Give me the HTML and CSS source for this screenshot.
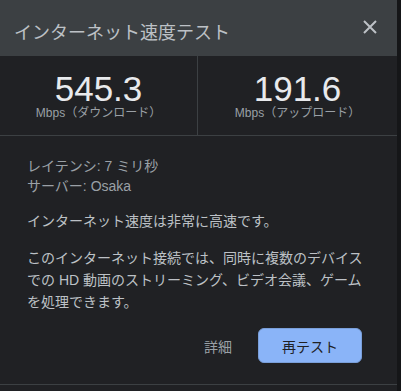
FILE: index.html
```html
<!DOCTYPE html>
<html lang="ja">
<head>
  <meta charset="UTF-8">
  <title>インターネット速度テスト</title>
  <link rel="stylesheet" href="styles.css">
</head>
<body>

<div class="panel">
  <div class="header">
    <div class="title">インターネット速度テスト</div>
    <svg class="close" width="14" height="14" viewBox="0 0 14 14">
      <path d="M1 1 L13 13 M13 1 L1 13" stroke="#bdc1c6" stroke-width="2" fill="none"/>
    </svg>
  </div>

  <div class="stats">
    <div class="stat">
      <div class="num">545.3</div>
      <div class="unit">Mbps（ダウンロード）</div>
    </div>
    <div class="stat">
      <div class="num">191.6</div>
      <div class="unit">Mbps（アップロード）</div>
    </div>
  </div>

  <div class="content">
    <div class="meta">
      <div>レイテンシ: 7 ミリ秒</div>
      <div>サーバー: Osaka</div>
    </div>
    <p class="summary">インターネット速度は非常に高速です。</p>
    <p class="desc">このインターネット接続では、同時に複数のデバイスでの HD 動画のストリーミング、ビデオ会議、ゲームを処理できます。</p>
    <div class="actions">
      <button class="link-btn">詳細</button>
      <button class="primary-btn">再テスト</button>
    </div>
  </div>
  <div class="rule"></div>
</div>

</body>
</html>
```

FILE: styles.css
```css
body {
  margin: 0;
  background: #151618;
  font-family: "Liberation Sans", "Noto Sans CJK JP", sans-serif;
}

.panel {
  width: 397px;
  height: 391px;
  background: #202124;
}

.header {
  display: flex;
  justify-content: space-between;
  align-items: flex-start;
  box-sizing: border-box;
  height: 56px;
  padding: 20px 20px 0 14px;
  background: #3c4043;
}

.title {
  font-size: 18px;
  line-height: 25px;
  padding-top: 1px;
  color: #bdc1c6;
}

.stats {
  display: grid;
  grid-template-columns: 198px 1fr;
  border-bottom: 1px solid #3c4043;
}

.stat {
  height: 79px;
  box-sizing: border-box;
  padding-top: 15px;
  text-align: center;
}

.stat:first-child {
  border-right: 1px solid #3c4043;
}

.num {
  font-size: 35px;
  line-height: 36px;
  color: #e8eaed;
}

.unit {
  font-size: 12px;
  line-height: 13px;
  color: #9aa0a6;
}

.content {
  padding: 20px 35px 0 27px;
  font-size: 14px;
}

.meta {
  line-height: 20px;
  color: #9aa0a6;
}

.summary {
  margin: 14px 0 0;
  line-height: 22px;
  color: #bdc1c6;
}

.desc {
  margin: 15px -8px 0 0;
  line-height: 22px;
  color: #bdc1c6;
}

.actions {
  display: flex;
  justify-content: flex-end;
  align-items: center;
  gap: 18px;
  margin-top: 15px;
}

.link-btn {
  padding: 0 8px;
  background: none;
  border: none;
  font: inherit;
  font-size: 14px;
  color: #9aa0a6;
}

.primary-btn {
  width: 104px;
  height: 35px;
  background: #8ab4f8;
  border: 1px solid #7a9fd9;
  border-radius: 6px;
  font: inherit;
  font-size: 14px;
  color: #202124;
}

.rule {
  margin-top: 21px;
  border-top: 1px solid #3c4043;
}
```
